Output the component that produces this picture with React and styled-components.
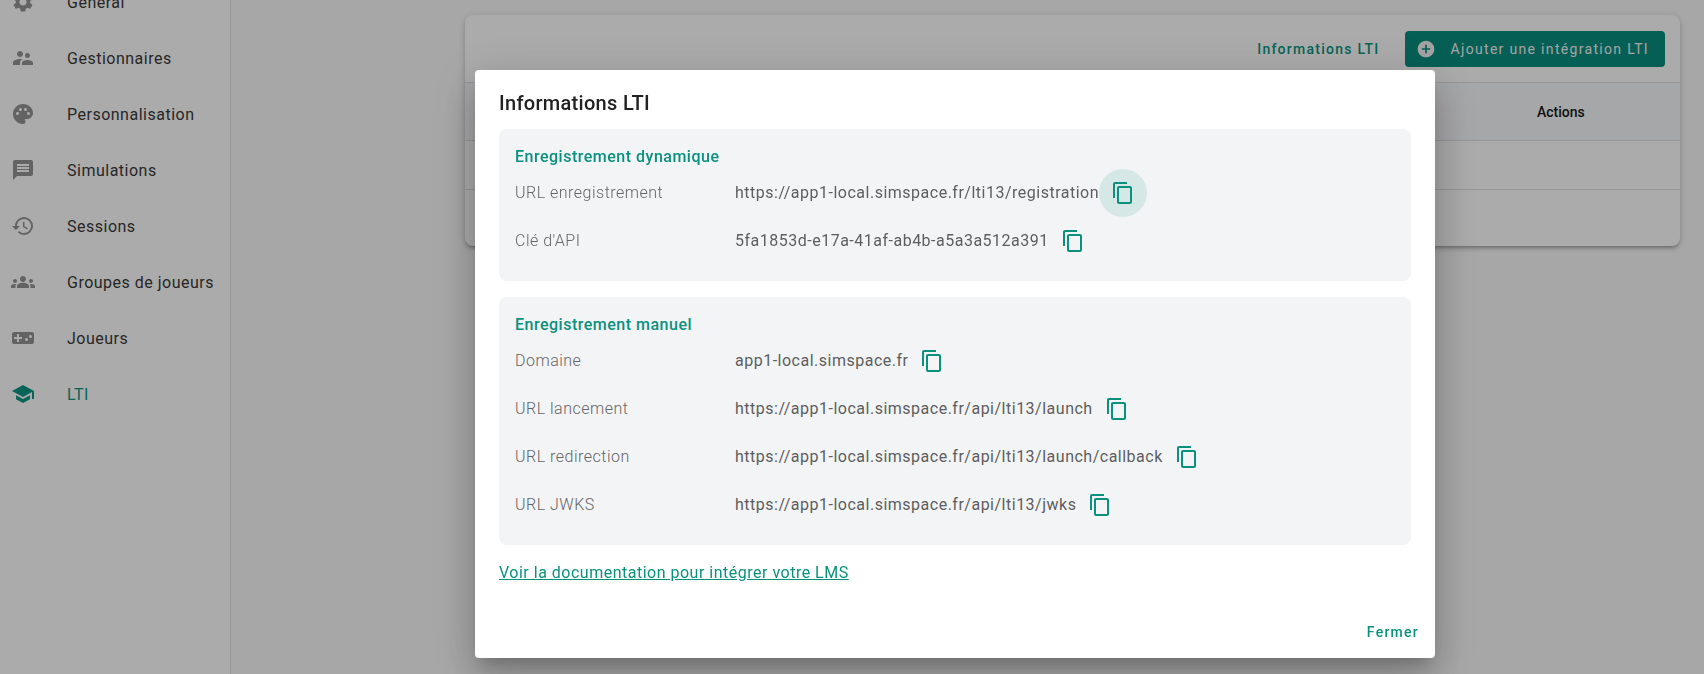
import React from 'react';
import styled, { createGlobalStyle } from 'styled-components';
import {
    MdAddCircle,
    MdContentCopy,
    MdGroups,
    MdHistory,
    MdMessage,
    MdPalette,
    MdSchool,
    MdSettings,
    MdSupervisorAccount,
    MdVideogameAsset,
} from 'react-icons/md';

const menu = [
    { label: 'Général', icon: <MdSettings /> },
    { label: 'Gestionnaires', icon: <MdSupervisorAccount /> },
    { label: 'Personnalisation', icon: <MdPalette /> },
    { label: 'Simulations', icon: <MdMessage /> },
    { label: 'Sessions', icon: <MdHistory /> },
    { label: 'Groupes de joueurs', icon: <MdGroups /> },
    { label: 'Joueurs', icon: <MdVideogameAsset /> },
    { label: 'LTI', icon: <MdSchool />, active: true },
];

const dynamicRows = [
    { label: 'URL enregistrement', value: 'https://app1-local.simspace.fr/lti13/registration', hover: true },
    { label: "Clé d'API", value: '5fa1853d-e17a-41af-ab4b-a5a3a512a391' },
];

const manualRows = [
    { label: 'Domaine', value: 'app1-local.simspace.fr' },
    { label: 'URL lancement', value: 'https://app1-local.simspace.fr/api/lti13/launch' },
    { label: 'URL redirection', value: 'https://app1-local.simspace.fr/api/lti13/launch/callback' },
    { label: 'URL JWKS', value: 'https://app1-local.simspace.fr/api/lti13/jwks' },
];

function InfoSection({ title, rows }) {
    return (
        <Section>
            <SectionTitle>{title}</SectionTitle>
            {rows.map((row) => (
                <Row key={row.label}>
                    <RowLabel>{row.label}</RowLabel>
                    <RowValue>{row.value}</RowValue>
                    <CopyButton $hover={row.hover}><MdContentCopy /></CopyButton>
                </Row>
            ))}
        </Section>
    );
}

export default function App() {
    return (
        <Page>
            <GlobalStyle />
            <Sidebar>
                <MenuList>
                    {menu.map((item) => (
                        <MenuItem key={item.label} $active={item.active}>
                            <MenuIcon>{item.icon}</MenuIcon>
                            {item.label}
                        </MenuItem>
                    ))}
                </MenuList>
            </Sidebar>
            <Main>
                <Card>
                    <CardHeader>
                        <TextButton>Informations LTI</TextButton>
                        <AddButton><MdAddCircle />Ajouter une intégration LTI</AddButton>
                    </CardHeader>
                    <TableHead><ActionsCell>Actions</ActionsCell></TableHead>
                    <TableRow />
                    <LastRow />
                </Card>
            </Main>
            <Backdrop>
                <Dialog>
                    <DialogTitle>Informations LTI</DialogTitle>
                    <DialogContent>
                        <InfoSection title="Enregistrement dynamique" rows={dynamicRows} />
                        <InfoSection title="Enregistrement manuel" rows={manualRows} />
                        <DocLink href="#">Voir la documentation pour intégrer votre LMS</DocLink>
                    </DialogContent>
                    <DialogActions>
                        <CloseButton>Fermer</CloseButton>
                    </DialogActions>
                </Dialog>
            </Backdrop>
        </Page>
    );
}

const GlobalStyle = createGlobalStyle`
    html, body {
        margin: 0;
        height: 100%;
        overflow: hidden;
        font-family: Roboto, "Liberation Sans", sans-serif;
    }
    #root {
        height: 100%;
    }
`;

const Page = styled.div`
    display: flex;
    height: 100%;
    background: #fafafa;
`;

const Sidebar = styled.nav`
    width: 230px;
    flex-shrink: 0;
    background: #fff;
    border-right: 1px solid #e0e0e0;
    overflow: hidden;
`;

const MenuList = styled.div`
    margin-top: -26px;
`;

const MenuItem = styled.div`
    display: flex;
    align-items: center;
    height: 56px;
    padding-left: 11px;
    font-size: 16px;
    letter-spacing: 0.5px;
    color: ${(p) => (p.$active ? '#0b9683' : '#3a3a3a')};
    svg {
        color: ${(p) => (p.$active ? '#0b9683' : '#949494')};
    }
`;

const MenuIcon = styled.span`
    display: flex;
    width: 56px;
    font-size: 24px;
`;

const Main = styled.main`
    flex: 1;
    padding: 15px 24px 0 234px;
`;

const Card = styled.section`
    background: #fff;
    border-radius: 8px;
    box-shadow: 0 3px 3px -2px rgba(0, 0, 0, 0.2), 0 3px 4px rgba(0, 0, 0, 0.14), 0 1px 8px rgba(0, 0, 0, 0.12);
    overflow: hidden;
`;

const CardHeader = styled.div`
    display: flex;
    align-items: center;
    justify-content: flex-end;
    gap: 25px;
    height: 68px;
    padding-right: 15px;
    border-bottom: 1px solid #e0e0e0;
    box-sizing: border-box;
`;

const TextButton = styled.span`
    font-size: 14px;
    font-weight: 500;
    letter-spacing: 1.25px;
    color: #0b9683;
`;

const AddButton = styled.span`
    display: flex;
    align-items: center;
    gap: 15px;
    height: 36px;
    padding: 0 16px 0 11px;
    border-radius: 4px;
    background: #088e7f;
    color: #f4f4f4;
    font-size: 14px;
    font-weight: 400;
    letter-spacing: 1.32px;
    svg {
        font-size: 20px;
    }
`;

const TableHead = styled.div`
    display: flex;
    justify-content: flex-end;
    align-items: center;
    height: 58px;
    background: #f8f9fc;
    border-bottom: 1px solid #e0e0e0;
    box-sizing: border-box;
`;

const ActionsCell = styled.span`
    width: 240px;
    font-size: 14px;
    font-weight: 500;
    color: #1a1a1a;
    text-align: left;
    padding-left: 97px;
    box-sizing: border-box;
`;

const TableRow = styled.div`
    height: 49px;
    border-bottom: 1px solid #e0e0e0;
    box-sizing: border-box;
`;

const LastRow = styled.div`
    height: 56px;
`;

const Backdrop = styled.div`
    position: fixed;
    inset: 0;
    display: flex;
    justify-content: center;
    align-items: flex-start;
    padding: 70px 0 0 206px;
    background: rgba(0, 0, 0, 0.33);
`;

const Dialog = styled.div`
    width: 960px;
    height: 588px;
    display: flex;
    flex-direction: column;
    background: #fff;
    border-radius: 4px;
    box-shadow: 0 11px 15px -7px rgba(0, 0, 0, 0.2), 0 24px 38px 3px rgba(0, 0, 0, 0.14), 0 9px 46px 8px rgba(0, 0, 0, 0.12);
`;

const DialogTitle = styled.h2`
    margin: 0;
    padding: 17px 24px 10px;
    font-size: 20px;
    font-weight: 500;
    line-height: 32px;
    letter-spacing: 0.3px;
    color: #212121;
`;

const DialogContent = styled.div`
    flex: 1;
    display: flex;
    flex-direction: column;
    align-items: flex-start;
    gap: 16px;
    padding: 0 24px;
`;

const Section = styled.div`
    align-self: stretch;
    padding: 16px;
    border-radius: 8px;
    background: #f3f4f6;
`;

const SectionTitle = styled.div`
    font-size: 16px;
    font-weight: 500;
    line-height: 24px;
    letter-spacing: 0.5px;
    color: #0a917e;
`;

const Row = styled.div`
    display: flex;
    align-items: center;
    height: 48px;
    font-size: 16px;
    letter-spacing: 0.5px;
`;

const RowLabel = styled.span`
    width: 220px;
    margin-bottom: 2px;
    font-weight: 300;
    color: #666;
`;

const RowValue = styled.span`
    margin-bottom: 2px;
    color: #5e5e5e;
`;

const CopyButton = styled.span`
    display: flex;
    align-items: center;
    justify-content: center;
    width: 48px;
    height: 48px;
    border-radius: 50%;
    font-size: 24px;
    color: #0a917e;
    background: ${(p) => (p.$hover ? '#d6e8e6' : 'transparent')};
`;

const DocLink = styled.a`
    font-size: 16px;
    line-height: 24px;
    letter-spacing: 0.5px;
    color: #0a917e;
`;

const DialogActions = styled.div`
    display: flex;
    justify-content: flex-end;
    padding: 8px;
`;

const CloseButton = styled.span`
    padding: 9px 8px;
    font-size: 14px;
    font-weight: 500;
    line-height: 18px;
    letter-spacing: 1.25px;
    color: #0a917e;
`;
